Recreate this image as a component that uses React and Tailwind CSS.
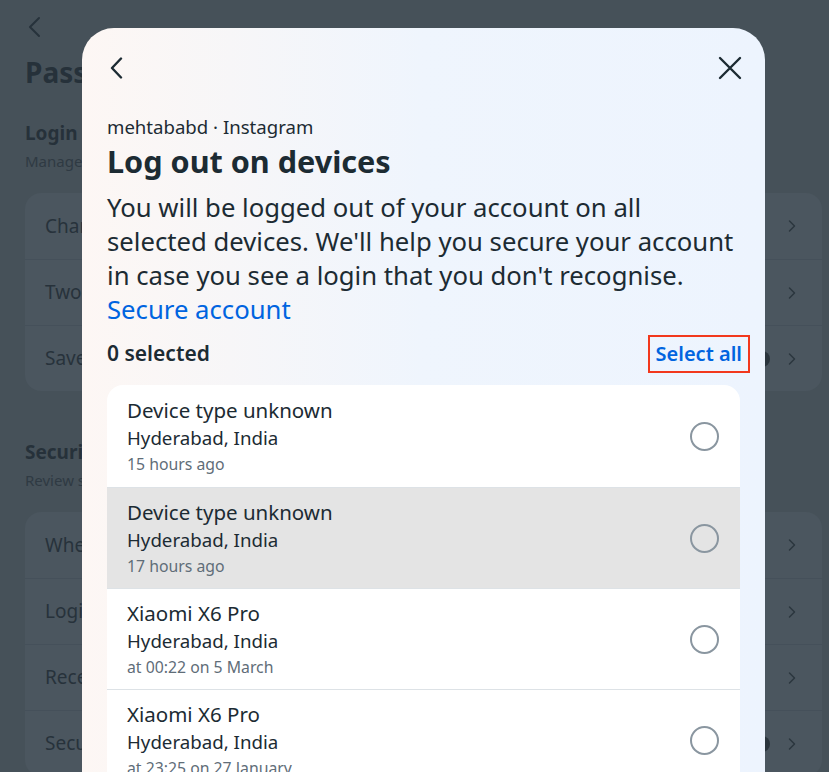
import { ChevronRight } from 'lucide-react';

const font = { fontFamily: '"Noto Sans", Roboto, sans-serif' };

const devices = [
  { name: 'Device type unknown', place: 'Hyderabad, India', when: '15 hours ago' },
  { name: 'Device type unknown', place: 'Hyderabad, India', when: '17 hours ago', active: true },
  { name: 'Xiaomi X6 Pro', place: 'Hyderabad, India', when: 'at 00:22 on 5 March' },
  { name: 'Xiaomi X6 Pro', place: 'Hyderabad, India', when: 'at 23:25 on 27 January' },
];

const BgRow = ({ label, dot }) => (
  <div className="flex h-[66px] items-center border-t border-[#45505a] pl-[20px] pr-[20px] first:border-t-0">
    <span className="flex-1 text-[19px] text-[#27323b]">{label}</span>
    {dot && <span className="mr-[12px] h-[16px] w-[16px] rounded-full bg-[#2a343c]" />}
    <ChevronRight size={20} strokeWidth={1.75} className="text-[#2b363e]" />
  </div>
);

// Dimmed settings page behind the sheet
const Background = () => (
  <div className="h-[772px] overflow-hidden bg-[#465159] pl-[25px] pr-[7px] pt-[16px]">
    <svg width="14" height="22" viewBox="0 0 14 22" className="ml-[2px]" fill="none">
      <polyline points="12,2 3,11 12,20" stroke="#27323b" strokeWidth="2" strokeLinecap="round" strokeLinejoin="round" />
    </svg>
    <div className="mt-[16px] text-[28px] font-bold leading-[36px] text-[#26313a]">Password and security</div>
    <div className="mt-[30px] text-[19px] font-bold leading-[26px] text-[#26313a]">Login &amp; recovery</div>
    <div className="mt-[4px] text-[15px] leading-[22px] text-[#2f3a43]">Manage your passwords, login preferences and recovery methods.</div>
    <div className="mt-[21px] rounded-[16px] bg-[#4b565f]">
      <BgRow label="Change password" />
      <BgRow label="Two-factor authentication" />
      <BgRow label="Saved login" dot />
    </div>
    <div className="mt-[48px] text-[19px] font-bold leading-[26px] text-[#26313a]">Security checks</div>
    <div className="mt-[4px] text-[15px] leading-[22px] text-[#2f3a43]">Review security issues by running checks across apps, devices and emails sent.</div>
    <div className="mt-[21px] rounded-[16px] bg-[#4b565f]">
      <BgRow label="Where you're logged in" />
      <BgRow label="Login alerts" />
      <BgRow label="Recent emails" />
      <BgRow label="Security Checkup" dot />
    </div>
  </div>
);

const Radio = () => (
  <span className="h-[29px] w-[29px] shrink-0 rounded-full border-2 border-[#8a96a0]" />
);

const DeviceRow = ({ device }) => (
  <div
    className={`flex h-[101px] items-center border-t border-[#dde2e6] pl-[20px] pr-[21px] first:h-[102px] first:border-t-0 ${
      device.active ? 'bg-[#e4e4e4]' : 'bg-white'
    }`}
  >
    <div className="flex-1">
      <div className="text-[20.5px] leading-[28px] text-[#1c2b33]">{device.name}</div>
      <div className="text-[18.7px] leading-[28px] text-[#1c2b33]">{device.place}</div>
      <div className="text-[15.8px] leading-[24px] text-[#5f6d78]">{device.when}</div>
    </div>
    <Radio />
  </div>
);

export default function App() {
  return (
    <div className="relative h-[772px] w-full overflow-hidden" style={font}>
      <Background />
      <div className="absolute left-[82px] top-[28px] h-[800px] w-[683px] rounded-[32px] bg-gradient-to-r from-[#fdf7f4] via-[#eff5fd] to-[#edf4fe] px-[25px] pt-[20px]">
        <div className="flex h-[40px] items-center justify-between">
          <svg width="16" height="22" viewBox="0 0 16 22" className="ml-[1px]" fill="none">
            <polyline points="13,1.5 4,11 13,20.5" stroke="#1c2b33" strokeWidth="2.4" strokeLinecap="round" strokeLinejoin="round" />
          </svg>
          <svg width="24" height="24" viewBox="0 0 24 24" className="-mr-[2px]" fill="none">
            <path d="M2 2L22 22M22 2L2 22" stroke="#1c2b33" strokeWidth="2.4" strokeLinecap="round" />
          </svg>
        </div>
        <div className="mt-[27px] text-[18.6px] leading-[24px] text-[#1c2b33]">mehtababd · Instagram</div>
        <h1 className="mt-[4px] text-[30.6px] font-bold leading-[36px] text-[#1c2b33]">Log out on devices</h1>
        <p className="mt-[12px] text-[25.7px] leading-[34px] text-[#1c2b33]">
          You will be logged out of your account on all
          <br />
          selected devices. We'll help you secure your account
          <br />
          in case you see a login that you don't recognise.
          <br />
          <span className="text-[#0064e0]">Secure account</span>
        </p>
        <div className="mt-[8px] flex h-[38px] items-center justify-between">
          <span className="text-[21px] font-semibold text-[#1c2b33]">0 selected</span>
          <span className="-mr-[10px] flex h-[38px] items-center border-2 border-[#f2381d] px-[6px] text-[20px] font-semibold text-[#0064e0]">
            Select all
          </span>
        </div>
        <div className="mt-[12px] overflow-hidden rounded-t-[16px]">
          {devices.map((d, i) => (
            <DeviceRow key={i} device={d} />
          ))}
        </div>
      </div>
    </div>
  );
}
